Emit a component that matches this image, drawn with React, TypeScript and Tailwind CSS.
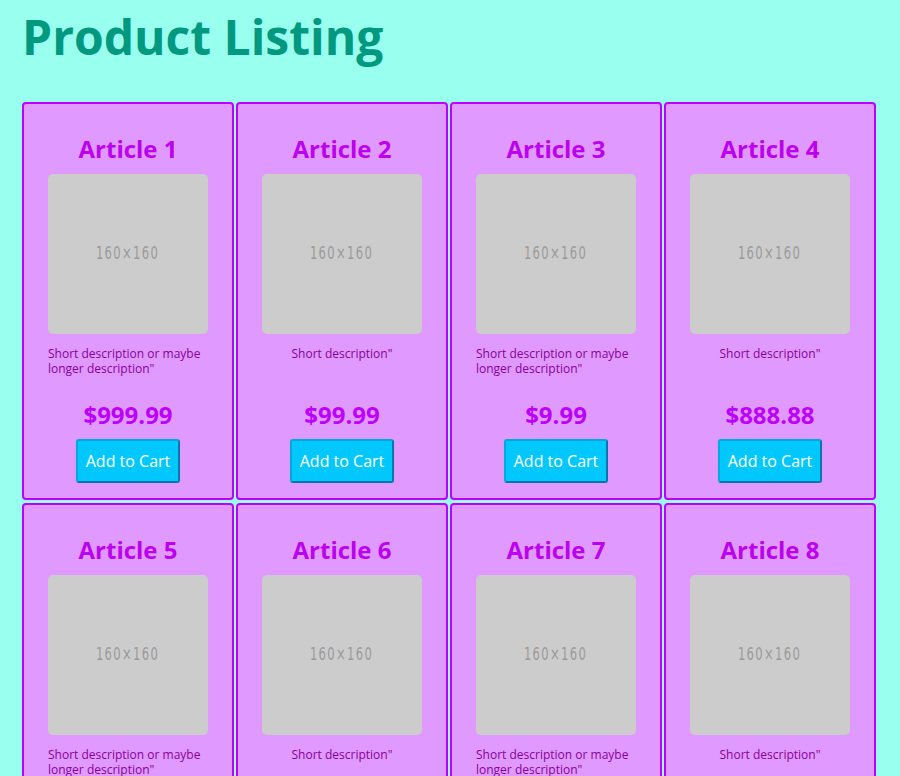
const products = [
  { name: 'Article 1', desc: 'Short description or maybe longer description"', price: '$999.99' },
  { name: 'Article 2', desc: 'Short description"', price: '$99.99' },
  { name: 'Article 3', desc: 'Short description or maybe longer description"', price: '$9.99' },
  { name: 'Article 4', desc: 'Short description"', price: '$888.88' },
  { name: 'Article 5', desc: 'Short description or maybe longer description"', price: '$999.99' },
  { name: 'Article 6', desc: 'Short description"', price: '$99.99' },
  { name: 'Article 7', desc: 'Short description or maybe longer description"', price: '$9.99' },
  { name: 'Article 8', desc: 'Short description"', price: '$888.88' },
];

function ProductCard({ name, desc, price }: { name: string; desc: string; price: string }) {
  return (
    <div className="flex h-[398px] flex-col items-center rounded-[4px] border-2 border-[#bb00ff] bg-[#df99ff] pt-[28px]">
      <h2 className="text-[24px] leading-[33px] font-bold text-[#bb00ee]">{name}</h2>
      <div className="mt-[9px] flex h-[160px] w-[160px] shrink-0 items-center justify-center rounded-[5px] bg-[#cccccc]">
        <span className="scale-x-[0.68] text-[17px] tracking-[2px] text-[#9a9a9a]" style={{ fontFamily: '"DejaVu Sans", sans-serif' }}>
          160×160
        </span>
      </div>
      <div className="mt-[12px] h-[52px] w-[160px] shrink-0">
        <p className="mx-auto w-fit text-[12px] leading-[15px] text-[#880099]">{desc}</p>
      </div>
      <p className="text-[24px] leading-[34px] font-bold text-[#bb00ff]">{price}</p>
      <button className="mt-[7px] h-[44px] w-[104px] shrink-0 rounded-[3px] border-2 border-[#00a8e0] border-r-[#0077aa] border-b-[#0077aa] bg-[#00c8ff] text-[16px] text-white">
        Add to Cart
      </button>
    </div>
  );
}

export default function App() {
  return (
    <main
      className="min-h-screen bg-[#99ffee] px-[22px]"
      style={{ fontFamily: '"Open Sans", sans-serif' }}
    >
      <h1 className="pt-[4px] text-[48px] leading-[65px] font-bold text-[#009980]">Product Listing</h1>
      <div className="mt-[33px] grid w-[854px] grid-cols-4 gap-x-[2px] gap-y-[3px]">
        {products.map((p) => (
          <ProductCard key={p.name} {...p} />
        ))}
      </div>
    </main>
  );
}
